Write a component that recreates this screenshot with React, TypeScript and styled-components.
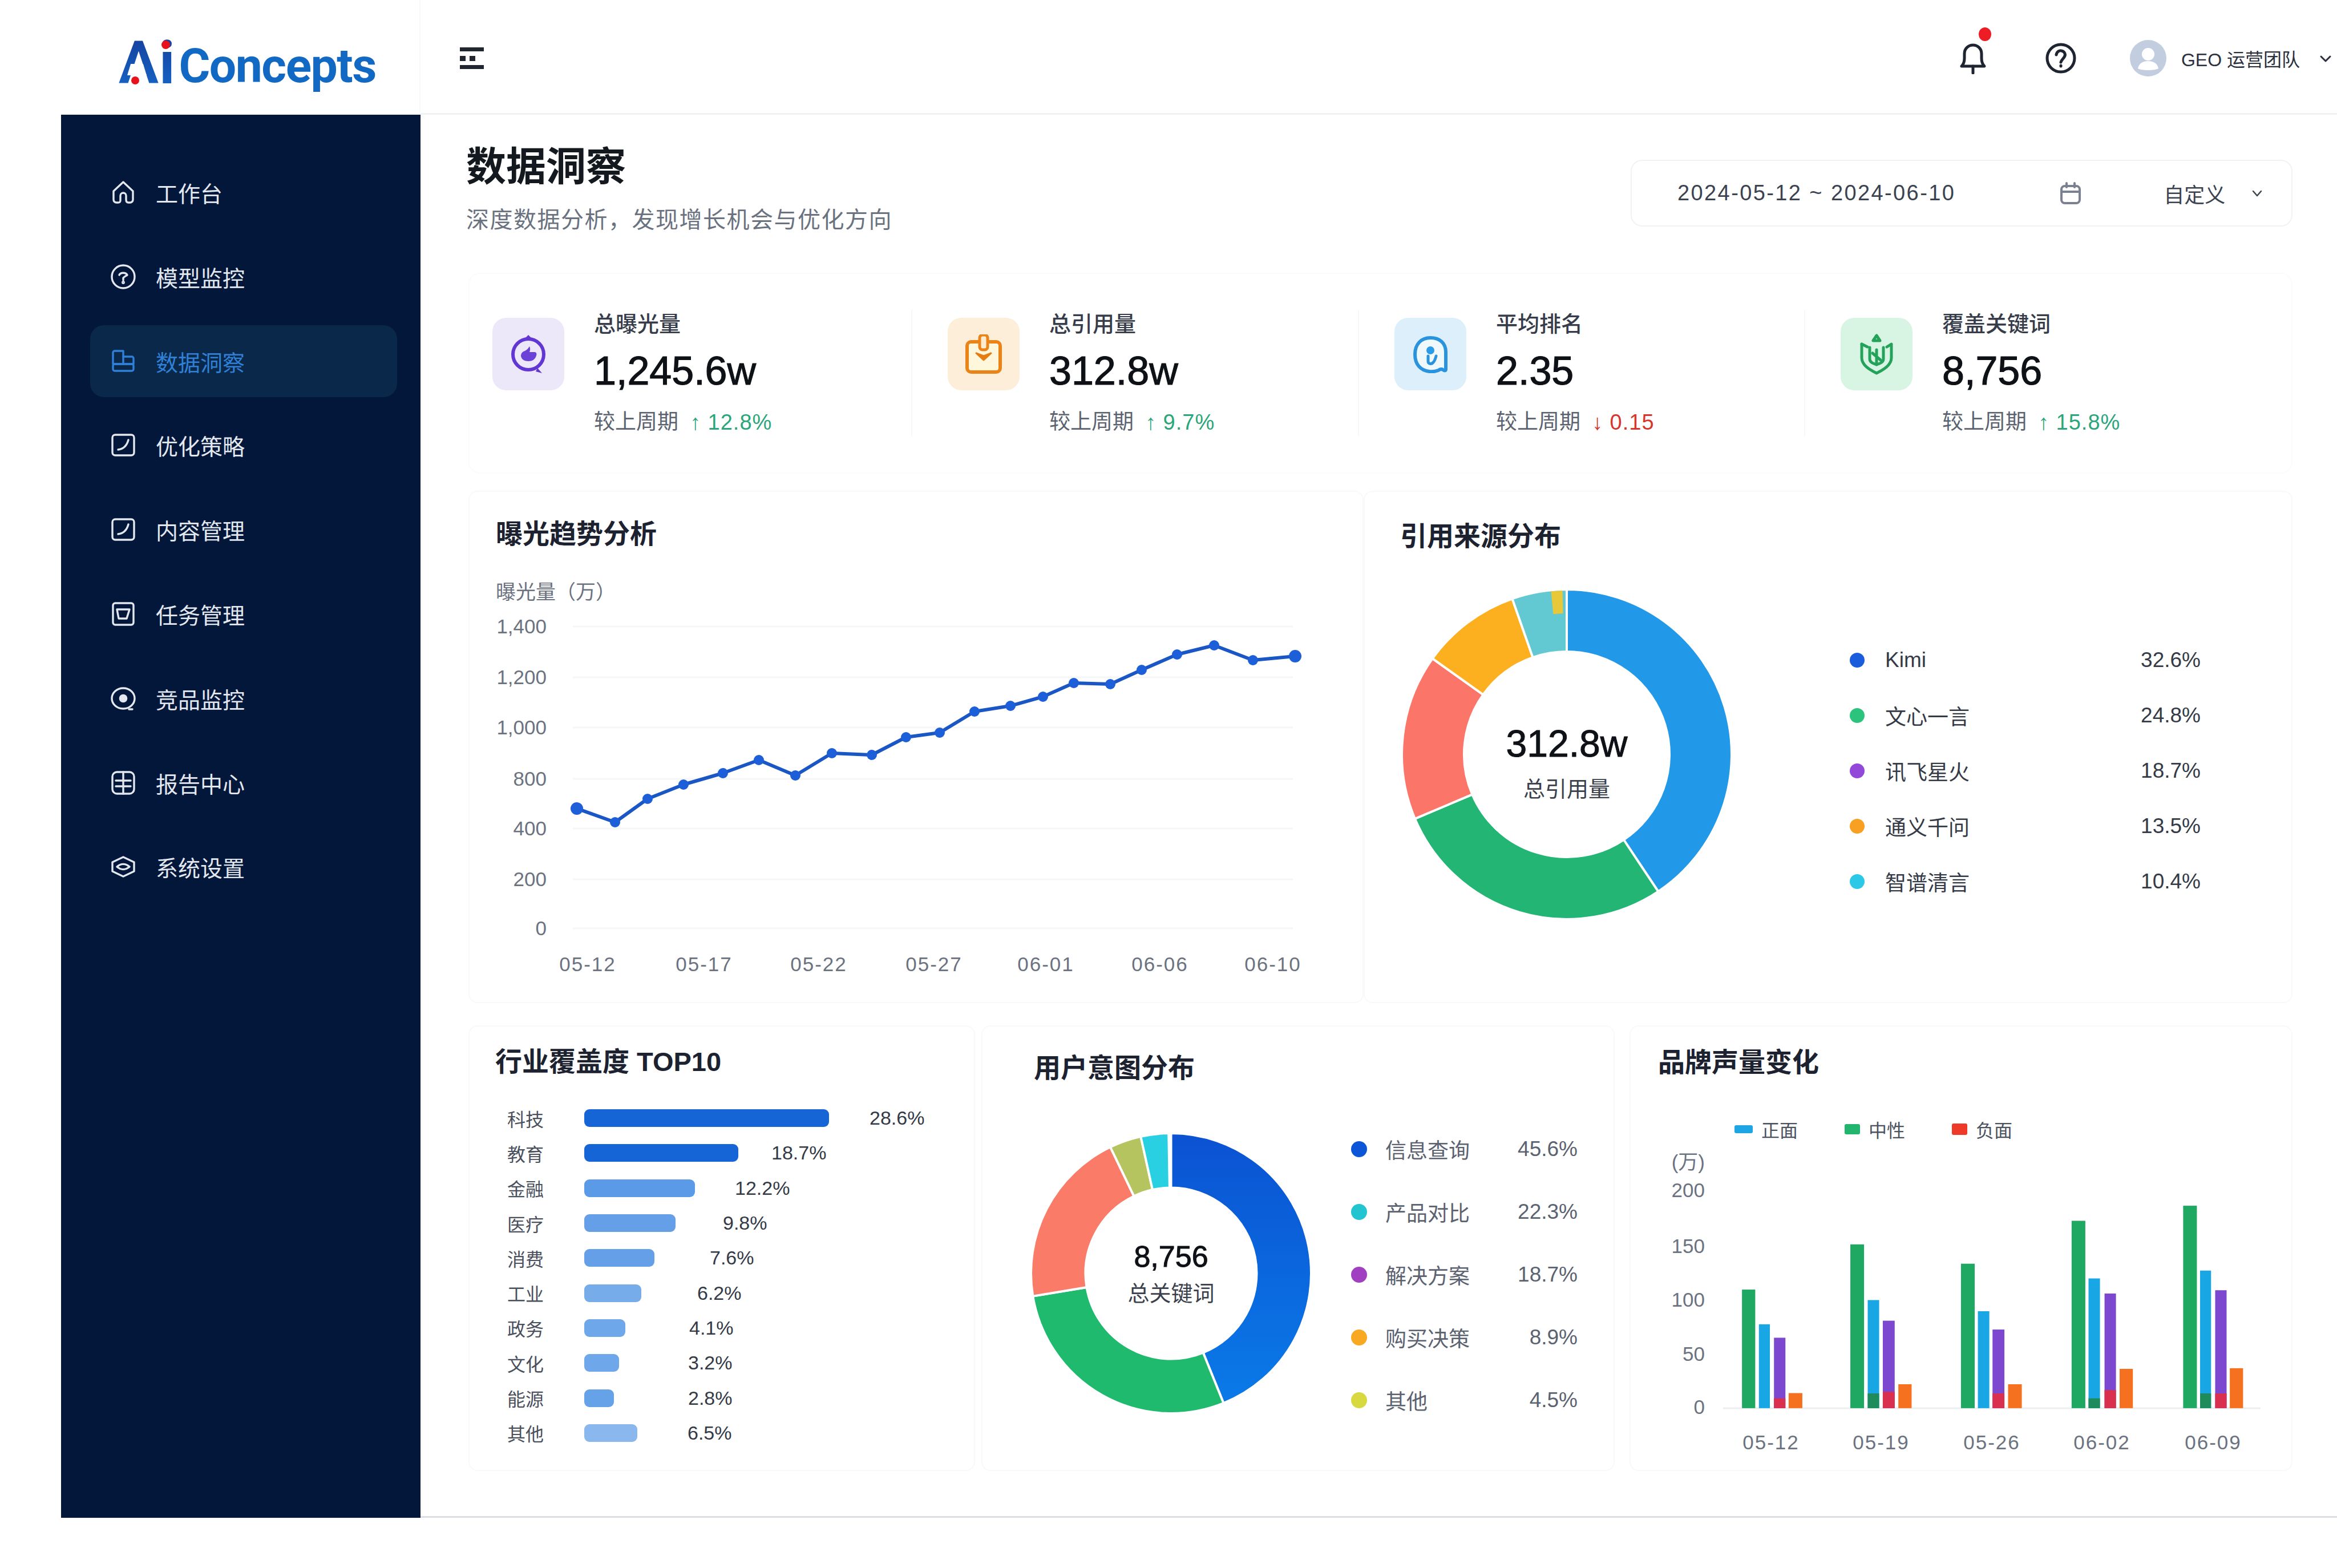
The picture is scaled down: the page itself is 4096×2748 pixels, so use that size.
import styled, { createGlobalStyle } from "styled-components";

const GlobalStyle = createGlobalStyle`
    html, body {
        margin: 0;
        padding: 0;
        background: #ffffff;
    }
    body {
        font-family: "Liberation Sans", "Noto Sans CJK SC", sans-serif;
    }
    * {
        box-sizing: border-box;
    }
`;

const Page = styled.div`
    display: grid;
    grid-template-columns: 630px 1fr;
    width: 4096px;
    height: 2748px;
    padding-left: 107px;
    overflow: hidden;
    background: #ffffff;
`;

const LeftColumn = styled.div`
    display: flex;
    flex-direction: column;
    height: 2660px;
`;

const LogoBox = styled.div`
    position: relative;
    display: flex;
    align-items: center;
    height: 201px;
    padding: 20px 0 0 101px;
    font-family: "Roboto", "Liberation Sans", sans-serif;
    font-weight: 700;
    border-right: 2px solid #f8f9fa;
`;

const LogoAi = styled.span`
    font-size: 104px;
    line-height: 1;
    letter-spacing: 1px;
    background: linear-gradient(180deg, #153f9c 0%, #1667c8 100%);
    -webkit-background-clip: text;
    background-clip: text;
    color: transparent;
`;

const LogoWord = styled.span`
    margin-left: 6px;
    padding-top: 10px;
    font-size: 84px;
    line-height: 1;
    letter-spacing: -1.5px;
    color: #1269c4;
`;

const LogoNotch = styled.i`
    position: absolute;
    left: 116px;
    top: 112px;
    width: 34px;
    height: 20px;
    background: #ffffff;
    clip-path: polygon(18% 0, 82% 0, 100% 100%, 0 100%);
`;

const LogoDot = styled.i<{ $left: number; $top: number; $size: number }>`
    position: absolute;
    left: ${(p) => p.$left}px;
    top: ${(p) => p.$top}px;
    width: ${(p) => p.$size}px;
    height: ${(p) => p.$size}px;
    border-radius: 50%;
    background: #e8121c;
`;

const Sidebar = styled.nav`
    flex: 1;
    display: flex;
    flex-direction: column;
    gap: 21.8px;
    padding: 73px 41px 0 51px;
    background: #03173a;
`;

const NavItem = styled.div<{ $active?: boolean }>`
    display: flex;
    align-items: center;
    gap: 33px;
    height: 126px;
    padding-left: 34px;
    border-radius: 24px;
    font-size: 39px;
    color: ${(p) => (p.$active ? "#2f80d6" : "#e3e8ef")};
    background: ${(p) => (p.$active ? "#0a2849" : "transparent")};
`;

const RightColumn = styled.div`
    display: flex;
    flex-direction: column;
    height: 2660px;
    border-bottom: 3px solid #dcdee2;
`;

const TopBar = styled.header`
    display: flex;
    align-items: center;
    height: 201px;
    padding: 6px 8px 0 68px;
    border-bottom: 3px solid #f1f2f4;
`;

const MenuGlyph = styled.svg`
    width: 44px;
    height: 44px;
`;

const TopActions = styled.div`
    display: flex;
    align-items: center;
    margin-left: auto;
    color: #1f2530;
`;

const BellWrap = styled.div`
    position: relative;
    display: flex;
    width: 50px;
    height: 56px;
    margin-right: 101px;
`;

const BellDot = styled.i`
    position: absolute;
    top: -26px;
    right: -7px;
    width: 22px;
    height: 24px;
    border-radius: 50%;
    background: #ee1c25;
`;

const Avatar = styled.svg`
    width: 64px;
    height: 64px;
    margin: 0 26px 0 93px;
`;

const UserName = styled.span`
    font-size: 32px;
    color: #2a303c;
    white-space: nowrap;
`;

const Chevron = styled.svg<{ $left: number }>`
    width: 24px;
    height: 24px;
    margin-left: ${(p) => p.$left}px;
`;

const Content = styled.main`
    padding: 50px 78px 0 84px;
`;

const PageHead = styled.div`
    display: flex;
    justify-content: space-between;
    align-items: flex-start;
    height: 227px;
`;

const TitleBlock = styled.div`
    margin-left: -4px;
`;

const PageTitle = styled.h1`
    margin: 0;
    font-size: 70px;
    line-height: 84px;
    font-weight: 700;
    color: #14181f;
`;

const PageSub = styled.p`
    margin: 25px 0 0;
    font-size: 40px;
    line-height: 50px;
    letter-spacing: 1.5px;
    color: #6a7280;
`;

const DateBox = styled.div`
    display: flex;
    align-items: center;
    width: 1160px;
    height: 117px;
    margin-top: 29px;
    padding-left: 80px;
    border: 2px solid #f1f2f5;
    border-radius: 20px;
    color: #3b4250;
`;

const DateText = styled.span`
    font-size: 38px;
    letter-spacing: 2.4px;
    white-space: nowrap;
`;

const CalendarGlyph = styled.svg`
    width: 38px;
    height: 40px;
    margin: 0 144px 0 183px;
    color: #7b8190;
`;

const RangeLabel = styled.span`
    font-size: 36px;
    white-space: nowrap;
`;

const StatStrip = styled.section`
    display: grid;
    grid-template-columns: 774px 783px 782px 1fr;
    align-items: center;
    height: 352px;
    margin-bottom: 30px;
    border: 2px solid #fafbfc;
    border-radius: 20px;
`;

const StatItem = styled.div<{ $first?: boolean }>`
    display: flex;
    align-items: flex-start;
    gap: 52px;
    height: 222px;
    padding-left: ${(p) => (p.$first ? 40 : 62)}px;
    padding-top: 14px;
    border-left: ${(p) => (p.$first ? "none" : "2px solid #f6f7f9")};
`;

const StatIconBox = styled.div<{ $bg: string }>`
    display: flex;
    align-items: center;
    justify-content: center;
    width: 126px;
    height: 127px;
    flex-shrink: 0;
    border-radius: 24px;
    background: ${(p) => p.$bg};
`;

const StatBody = styled.div`
    display: flex;
    flex-direction: column;
    margin-top: -14px;
`;

const StatLabel = styled.div`
    font-size: 38px;
    line-height: 50px;
    font-weight: 500;
    color: #363c49;
`;

const StatValue = styled.div`
    margin-top: 15px;
    font-size: 70px;
    line-height: 84px;
    -webkit-text-stroke: 1.2px #0e1116;
    color: #0e1116;
`;

const StatChange = styled.div`
    display: flex;
    gap: 20px;
    margin-top: 23px;
    font-size: 37px;
    line-height: 50px;
    color: #5c6370;
`;

const Delta = styled.span<{ $down?: boolean }>`
    font-size: 38px;
    letter-spacing: 1px;
    color: ${(p) => (p.$down ? "#d8352a" : "#2aa67a")};
`;

const ChartRow = styled.section<{ $height: number; $gap: number; $below?: number }>`
    display: flex;
    gap: ${(p) => p.$gap}px;
    height: ${(p) => p.$height}px;
    margin-bottom: ${(p) => p.$below ?? 0}px;
`;

const Card = styled.article<{ $width?: number; $padLeft: number; $padTop: number; $shift?: number }>`
    flex: ${(p) => (p.$width ? `0 0 ${p.$width}px` : "1")};
    margin-left: ${(p) => p.$shift ?? 0}px;
    padding: ${(p) => p.$padTop}px 0 0 ${(p) => p.$padLeft}px;
    border: 2px solid #f8f9fa;
    border-radius: 16px;
`;

const CardTitle = styled.h2`
    margin: 0;
    font-size: 47px;
    line-height: 60px;
    font-weight: 700;
    color: #1c2230;
`;

const LineSvg = styled.svg`
    display: block;
    width: 1500px;
    height: 750px;
    margin-top: 14px;
`;

const AxisText = styled.text<{ $spread?: boolean }>`
    font-size: 35px;
    letter-spacing: ${(p) => (p.$spread ? 2 : 0)}px;
    fill: #6b7280;
`;

const DonutBody = styled.div<{ $top: number; $shift: number }>`
    display: flex;
    align-items: flex-start;
    margin: ${(p) => p.$top}px 0 0 ${(p) => p.$shift}px;
`;

const DonutWrap = styled.div<{ $size: number }>`
    position: relative;
    flex-shrink: 0;
    width: ${(p) => p.$size}px;
    height: ${(p) => p.$size}px;
`;

const DonutOverlay = styled.svg`
    position: absolute;
    left: 0;
    top: 0;
`;

const DonutCenter = styled.div<{ $drop: number }>`
    position: absolute;
    inset: 0;
    display: flex;
    flex-direction: column;
    align-items: center;
    justify-content: center;
    padding-top: ${(p) => p.$drop}px;
`;

const CenterValue = styled.div<{ $size: number }>`
    font-size: ${(p) => p.$size}px;
    line-height: 1.15;
    -webkit-text-stroke: 1px #0e1116;
    color: #0e1116;
`;

const CenterLabel = styled.div<{ $gap: number }>`
    margin-top: ${(p) => p.$gap}px;
    font-size: 38px;
    line-height: 50px;
    color: #3a404c;
`;

const Legend = styled.ul<{ $gap: number; $top: number; $width: number }>`
    flex-shrink: 0;
    width: ${(p) => p.$width}px;
    margin: ${(p) => p.$top}px 0 0 ${(p) => p.$gap}px;
    padding: 0;
    list-style: none;
`;

const LegendRow = styled.li<{ $height: number; $color: string }>`
    display: flex;
    align-items: center;
    height: ${(p) => p.$height}px;
    font-size: 37px;
    color: ${(p) => p.$color};
`;

const LegendDot = styled.i<{ $color: string; $size: number; $after: number }>`
    width: ${(p) => p.$size}px;
    height: ${(p) => p.$size}px;
    margin-right: ${(p) => p.$after}px;
    border-radius: 50%;
    background: ${(p) => p.$color};
`;

const LegendValue = styled.span`
    margin-left: auto;
`;

const BarList = styled.div`
    margin: 38px 0 0 21px;
`;

const BarRow = styled.div`
    display: flex;
    align-items: center;
    height: 61.3px;
`;

const BarLabel = styled.span`
    width: 135px;
    font-size: 32px;
    color: #4a505c;
`;

const Bar = styled.div<{ $width: number; $color: string }>`
    width: ${(p) => p.$width}px;
    height: 31px;
    border-radius: 9px;
    background: ${(p) => p.$color};
`;

const BarValue = styled.span<{ $gap: number }>`
    margin-left: ${(p) => p.$gap}px;
    font-size: 34px;
    color: #343a46;
`;

const BrandLegend = styled.div`
    display: flex;
    align-items: center;
    height: 40px;
    margin: 67px 0 0 134px;
`;

const BrandKey = styled.span<{ $color: string; $width: number; $height: number; $gap: number }>`
    display: flex;
    align-items: center;
    margin-right: ${(p) => p.$gap}px;
    font-size: 32px;
    color: #4b5260;

    &::before {
        content: "";
        width: ${(p) => p.$width}px;
        height: ${(p) => p.$height}px;
        margin-right: 15px;
        border-radius: 3px;
        background: ${(p) => p.$color};
    }
`;

const BrandSvg = styled.svg`
    display: block;
    width: 1060px;
    height: 560px;
    margin: 0 0 0 24px;
`;

function NavGlyph({ name }: { name: string }) {
    let body = null;
    if (name === "home") {
        body = (
            <path d="M3.500 11 12 3l8.500 8v7.500a2.500 2.500 0 0 1-2.500 2.500h-1.500c-1.500 0-2-1-2-2.500V15a2.500 2.500 0 0 0-5 0v4c0 1.500-.5 2-2 2H6a2.500 2.500 0 0 1-2.500-2.500z" />
        );
    } else if (name === "watch") {
        body = (
            <>
                <circle cx="12" cy="12" r="10" />
                <path d="M8.500 10.500c1-2.500 6-2.500 7 0-1.500 1-2.500 1.500-3.500 2.500v2" />
                <circle cx="12" cy="17" r=".6" />
            </>
        );
    } else if (name === "book") {
        body = (
            <>
                <path d="M3 4.500A1.500 1.500 0 0 1 4.500 3H12v11.500H3z" />
                <path d="M12 8h7.500A1.500 1.500 0 0 1 21 9.500v5H12" />
                <rect x="3" y="14.500" width="18" height="6" rx="1.500" />
            </>
        );
    } else if (name === "pen") {
        body = (
            <>
                <rect x="2.500" y="3" width="19" height="18" rx="2.500" />
                <path d="M7.500 16c4.500-.5 7.500-3 9-8.500" />
            </>
        );
    } else if (name === "task") {
        body = (
            <>
                <rect x="3" y="2.500" width="18" height="19" rx="2" />
                <path d="M6.500 8h11l-2.500 8H8z" />
            </>
        );
    } else if (name === "rival") {
        body = (
            <>
                <ellipse cx="12" cy="12" rx="10" ry="9" />
                <circle cx="12" cy="12" r="2.800" fill="currentColor" />
                <path d="M17 21.500h3" />
            </>
        );
    } else if (name === "report") {
        body = (
            <>
                <rect x="2.500" y="2.500" width="19" height="19" rx="4" />
                <path d="M12 2.500v19M5.500 10h13M5.500 15h13" />
            </>
        );
    } else {
        body = (
            <>
                <path d="M12 3.500 21.500 8v8L12 20.500 2.500 16V8z" />
                <path d="M6.500 12c3.500-3 7.500-3 11 0-3.500 3-7.500 3-11 0z" />
            </>
        );
    }
    return (
        <svg width="48" height="48" viewBox="0 0 24 24" fill="none" stroke="currentColor" strokeWidth="1.700" strokeLinecap="round" strokeLinejoin="round">
            {body}
        </svg>
    );
}

function StatGlyph({ kind }: { kind: string }) {
    if (kind === "eye") {
        return (
            <svg width="64" height="72" viewBox="0 0 64 72" fill="none">
                <circle cx="32" cy="36" r="27" stroke="#6236d2" strokeWidth="6" />
                <path d="M32 2l6 6H26zM48 60l8 9-11-3z" fill="#6236d2" />
                <path d="M34 22c2 4 1 8 0 10h9c3 0 4 3 3 6-2 7-7 10-14 10-7 0-12-3-13-9 0-5 3-8 7-9 4-2 6-5 8-8z" fill="#6a42d8" />
            </svg>
        );
    }
    if (kind === "clip") {
        return (
            <svg width="66" height="70" viewBox="0 0 66 70" fill="none">
                <rect x="4" y="13" width="58" height="53" rx="7" fill="#fff7dc" stroke="#ea8418" strokeWidth="6" />
                <rect x="26" y="1" width="14" height="26" rx="5" fill="#fdeccf" stroke="#ea8418" strokeWidth="5" />
                <path d="M20 33l13 12 13-12-13 5z" fill="#e67d12" stroke="#e67d12" strokeWidth="3" strokeLinejoin="round" />
            </svg>
        );
    }
    if (kind === "info") {
        return (
            <svg width="62" height="66" viewBox="0 0 62 66" fill="none">
                <path d="M31 4c16 0 27 9 27 25v30c0 3-2 3-5 1-3-2-5-1-8 1-5 2-10 3-16 2C13 61 4 50 4 33 4 15 15 4 31 4z" fill="#eff8fb" stroke="#2a93de" strokeWidth="6" strokeLinejoin="round" />
                <circle cx="31" cy="26" r="7" fill="#2a9be6" />
                <path d="M27 36v9c0 5 6 6 9 2 3-3 4-7 5-11" stroke="#2a93de" strokeWidth="5" strokeLinecap="round" />
            </svg>
        );
    }
    return (
        <svg width="62" height="72" viewBox="0 0 62 72" fill="none" stroke="#25a25a" strokeWidth="5" strokeLinecap="round" strokeLinejoin="round">
            <path d="M5 18v24c0 13 14 21 26 27 12-6 26-14 26-27V18l-8 5" />
            <path d="M5 18l10 5M31 3l-6 9h12z" />
            <path d="M19 24v20c0 6 6 8 12 10 6-2 12-4 12-10V24" />
            <path d="M31 28v26M24 34l14 12" />
        </svg>
    );
}

const polar = (cx: number, cy: number, r: number, deg: number) => {
    const a = ((deg - 90) * Math.PI) / 180;
    return `${(cx + r * Math.cos(a)).toFixed(2)} ${(cy + r * Math.sin(a)).toFixed(2)}`;
};

const ringPath = (c: number, R: number, r: number, from: number, to: number) => {
    const large = to - from > 180 ? 1 : 0;
    return `M${polar(c, c, R, from)}A${R} ${R} 0 ${large} 1 ${polar(c, c, R, to)}L${polar(c, c, r, to)}A${r} ${r} 0 ${large} 0 ${polar(c, c, r, from)}Z`;
};

type Slice = { from: number; to: number; color: string };

function Donut({ size, inner, slices, id }: { size: number; inner: number; slices: Slice[]; id: string }) {
    const c = size / 2;
    return (
        <svg width={size} height={size} viewBox={`0 0 ${size} ${size}`}>
            <defs>
                <linearGradient id={id} x1="0" y1="0" x2="0" y2="1">
                    <stop offset="0" stopColor="#0b52d2" />
                    <stop offset="1" stopColor="#0a7ae8" />
                </linearGradient>
            </defs>
            {slices.map((s) => (
                <path
                    key={s.from}
                    d={ringPath(c, c, inner, s.from, s.to)}
                    fill={s.color === "grad" ? `url(#${id})` : s.color}
                    stroke="#ffffff"
                    strokeWidth="4"
                />
            ))}
        </svg>
    );
}

const navItems = [
    { icon: "home", label: "工作台" },
    { icon: "watch", label: "模型监控" },
    { icon: "book", label: "数据洞察", active: true },
    { icon: "pen", label: "优化策略" },
    { icon: "pen", label: "内容管理" },
    { icon: "task", label: "任务管理" },
    { icon: "rival", label: "竞品监控" },
    { icon: "report", label: "报告中心" },
    { icon: "gear", label: "系统设置" },
];

const stats = [
    { kind: "eye", bg: "#ece8fa", label: "总曝光量", value: "1,245.6w", delta: "↑ 12.8%" },
    { kind: "clip", bg: "#fdeeda", label: "总引用量", value: "312.8w", delta: "↑ 9.7%" },
    { kind: "info", bg: "#dceffa", label: "平均排名", value: "2.35", delta: "↓ 0.15", down: true },
    { kind: "shield", bg: "#d8f5e4", label: "覆盖关键词", value: "8,756", delta: "↑ 15.8%" },
];

const linePoints = [
    [1011, 1417], [1078, 1441], [1135, 1400], [1198, 1375], [1267, 1355], [1330, 1332], [1394, 1359],
    [1458, 1320], [1528, 1323], [1588, 1292], [1647, 1284], [1708, 1247], [1771, 1237], [1828, 1221],
    [1882, 1197], [1946, 1199], [2001, 1174], [2063, 1147], [2128, 1131], [2196, 1157], [2270, 1150],
];
const lineTicks = [
    ["1,400", 1098], ["1,200", 1187], ["1,000", 1275], ["800", 1365], ["400", 1452], ["200", 1541], ["0", 1627],
] as const;
const lineDates = [
    ["05-12", 1030], ["05-17", 1234], ["05-22", 1435], ["05-27", 1637], ["06-01", 1833], ["06-06", 2033], ["06-10", 2231],
] as const;

const sourceSlices: Slice[] = [
    { from: 0, to: 146.3, color: "#2299e8" },
    { from: 146.3, to: 247, color: "#22b573" },
    { from: 247, to: 305.5, color: "#fb7568" },
    { from: 305.5, to: 340.7, color: "#fdb01f" },
    { from: 340.7, to: 360, color: "#62c8d2" },
];
const sourceLegend = [
    ["Kimi", "32.6%", "#1a5cdc"],
    ["文心一言", "24.8%", "#2cc47c"],
    ["讯飞星火", "18.7%", "#9248d8"],
    ["通义千问", "13.5%", "#f7a021"],
    ["智谱清言", "10.4%", "#2cc8e8"],
];

const industries = [
    ["科技", 429, "28.6%", 71, "#1565d6"],
    ["教育", 270, "18.7%", 58, "#1565d6"],
    ["金融", 194, "12.2%", 70, "#5a9ae6"],
    ["医疗", 160, "9.8%", 83, "#649fe8"],
    ["消费", 123, "7.6%", 97, "#649fe8"],
    ["工业", 100, "6.2%", 98, "#76ace9"],
    ["政务", 72, "4.1%", 112, "#6ea7ea"],
    ["文化", 61, "3.2%", 121, "#6ea7ea"],
    ["能源", 52, "2.8%", 130, "#66a2e8"],
    ["其他", 93, "6.5%", 88, "#8ab8ee"],
] as const;

const intentSlices: Slice[] = [
    { from: 0, to: 158, color: "grad" },
    { from: 158, to: 260.6, color: "#20ba6e" },
    { from: 260.6, to: 334.3, color: "#f97b68" },
    { from: 334.3, to: 347.5, color: "#b5c45e" },
    { from: 347.5, to: 359, color: "#28d0e2" },
];
const intentLegend = [
    ["信息查询", "45.6%", "#0b55d6"],
    ["产品对比", "22.3%", "#22c4d0"],
    ["解决方案", "18.7%", "#a040c0"],
    ["购买决策", "8.9%", "#f9a821"],
    ["其他", "4.5%", "#d8d840"],
];

// x0, x1 and top of each bar: green, blue, purple, orange, then the height of the
// dark stretch at the foot of blue and purple
const brandGroups = [
    { label: "05-12", cx: 3104, bars: [[266, 295, 838], [303, 327, 944], [336, 361, 985], [368, 398, 1154]], foot: [0, 30] },
    { label: "05-19", cx: 3297, bars: [[503, 533, 700], [541, 566, 870], [574, 600, 933], [608, 637, 1127]], foot: [45, 50] },
    { label: "05-26", cx: 3491, bars: [[745, 775, 759], [782, 807, 904], [814, 840, 960], [848, 878, 1127]], foot: [0, 45] },
    { label: "06-02", cx: 3684, bars: [[987, 1017, 628], [1024, 1049, 804], [1059, 1084, 850], [1092, 1121, 1080]], foot: [30, 55] },
    { label: "06-09", cx: 3879, bars: [[1231, 1261, 582], [1268, 1292, 780], [1301, 1326, 840], [1333, 1362, 1078]], foot: [45, 45] },
];
const brandColors = ["#1fa862", "#18a7e4", "#7c48cf", "#f5701f"];
const brandTicks = [["(万)", 2038], ["200", 2087], ["150", 2185], ["100", 2279], ["50", 2374], ["0", 2467]] as const;
const bx = (d: number) => 2840 + d / 1.248;
const by = (d: number) => 1780 + d / 1.742;

export default function App() {
    return (
        <Page>
            <GlobalStyle />
            <LeftColumn>
                <LogoBox>
                    <LogoAi>Ai</LogoAi>
                    <LogoWord>Concepts</LogoWord>
                    <LogoNotch />
                    <LogoDot $left={176} $top={71} $size={15} />
                    <LogoDot $left={123} $top={134} $size={14} />
                </LogoBox>
                <Sidebar>
                    {navItems.map((item) => (
                        <NavItem key={item.label} $active={item.active}>
                            <NavGlyph name={item.icon} />
                            <span>{item.label}</span>
                        </NavItem>
                    ))}
                </Sidebar>
            </LeftColumn>

            <RightColumn>
                <TopBar>
                    <MenuGlyph viewBox="0 0 44 44">
                        <rect x="1" y="3" width="42" height="7" fill="#22262e" />
                        <rect x="1" y="18" width="10" height="9" fill="#22262e" />
                        <rect x="18" y="18" width="10" height="9" fill="#22262e" />
                        <rect x="1" y="34" width="42" height="7" fill="#22262e" />
                    </MenuGlyph>
                    <TopActions>
                        <BellWrap>
                            <svg width="50" height="56" viewBox="0 0 50 56" fill="none" stroke="#1f2530" strokeWidth="5" strokeLinecap="round" strokeLinejoin="round">
                                <path d="M5 42c4-4 5-8 5-14V20C10 11 17 5 25 5s15 6 15 15v8c0 6 1 10 5 14z" />
                                <path d="M25 42v12" />
                            </svg>
                            <BellDot />
                        </BellWrap>
                        <svg width="56" height="56" viewBox="0 0 56 56" fill="none" stroke="#1f2530" strokeWidth="5" strokeLinecap="round">
                            <circle cx="28" cy="28" r="24" />
                            <path d="M20 22c1-6 6-8 9-7 6 1 8 7 5 11-2 3-5 5-6 9" />
                            <path d="M28 41v1" />
                        </svg>
                        <Avatar viewBox="0 0 64 64">
                            <circle cx="32" cy="32" r="32" fill="#c3cde0" />
                            <circle cx="32" cy="25" r="11" fill="#ffffff" />
                            <path d="M14 50c2-10 10-13 18-13s16 3 18 13c-5 4-31 4-36 0z" fill="#ffffff" />
                        </Avatar>
                        <UserName>GEO 运营团队</UserName>
                        <Chevron $left={33} viewBox="0 0 24 24" fill="none" stroke="#2a303c" strokeWidth="3" strokeLinecap="round" strokeLinejoin="round">
                            <path d="M4 9l8 8 8-8" />
                        </Chevron>
                    </TopActions>
                </TopBar>

                <Content>
                    <PageHead>
                        <TitleBlock>
                            <PageTitle>数据洞察</PageTitle>
                            <PageSub>深度数据分析，发现增长机会与优化方向</PageSub>
                        </TitleBlock>
                        <DateBox>
                            <DateText>2024-05-12 ~ 2024-06-10</DateText>
                            <CalendarGlyph viewBox="0 0 38 40" fill="none" stroke="currentColor" strokeWidth="4" strokeLinecap="round">
                                <rect x="3" y="7" width="32" height="30" rx="6" />
                                <path d="M3 17h32M12 2v7M26 2v7" />
                            </CalendarGlyph>
                            <RangeLabel>自定义</RangeLabel>
                            <Chevron $left={44} viewBox="0 0 24 24" fill="none" stroke="#3b4250" strokeWidth="2.500" strokeLinecap="round" strokeLinejoin="round">
                                <path d="M5 8l7 8 7-8" />
                            </Chevron>
                        </DateBox>
                    </PageHead>

                    <StatStrip>
                        {stats.map((s, i) => (
                            <StatItem key={s.label} $first={i === 0}>
                                <StatIconBox $bg={s.bg}>
                                    <StatGlyph kind={s.kind} />
                                </StatIconBox>
                                <StatBody>
                                    <StatLabel>{s.label}</StatLabel>
                                    <StatValue>{s.value}</StatValue>
                                    <StatChange>
                                        <span>较上周期</span>
                                        <Delta $down={s.down}>{s.delta}</Delta>
                                    </StatChange>
                                </StatBody>
                            </StatItem>
                        ))}
                    </StatStrip>

                    <ChartRow $height={898} $gap={0} $below={39}>
                        <Card $width={1569} $padLeft={46} $padTop={44}>
                            <CardTitle>曝光趋势分析</CardTitle>
                            <LineSvg viewBox="869 980 1500 750">
                                <AxisText x="869" y="1050">曝光量（万）</AxisText>
                                {lineTicks.map(([label, y]) => (
                                    <g key={label}>
                                        <AxisText x="958" y={y + 12} textAnchor="end">{label}</AxisText>
                                        <line x1="1004" x2="2266" y1={y} y2={y} stroke="#f5f6f8" strokeWidth="3" />
                                    </g>
                                ))}
                                {lineDates.map(([label, x]) => (
                                    <AxisText key={label} $spread x={x} y="1702" textAnchor="middle">{label}</AxisText>
                                ))}
                                <polyline
                                    points={linePoints.map((p) => p.join(",")).join(" ")}
                                    fill="none"
                                    stroke="#1a56c4"
                                    strokeWidth="6"
                                    strokeLinejoin="round"
                                />
                                {linePoints.map(([x, y], i) => (
                                    <circle key={x} cx={x} cy={y} r={i === 0 || i === linePoints.length - 1 ? 11 : 9} fill="#1d5fd8" />
                                ))}
                            </LineSvg>
                        </Card>
                        <Card $padLeft={62} $padTop={48}>
                            <CardTitle>引用来源分布</CardTitle>
                            <DonutBody $top={63} $shift={3}>
                                <DonutWrap $size={578}>
                                    <Donut id="srcBlue" size={578} inner={180} slices={sourceSlices} />
                                    <DonutOverlay width="578" height="578" viewBox="0 0 578 578">
                                        <path d={ringPath(289, 287, 247, 354.5, 358.5)} fill="#e8c838" />
                                    </DonutOverlay>
                                    <DonutCenter $drop={30}>
                                        <CenterValue $size={66}>312.8w</CenterValue>
                                        <CenterLabel $gap={16}>总引用量</CenterLabel>
                                    </DonutCenter>
                                </DonutWrap>
                                <Legend $gap={207} $top={75} $width={615}>
                                    {sourceLegend.map(([name, pct, color]) => (
                                        <LegendRow key={name} $height={97} $color="#343a46">
                                            <LegendDot $color={color} $size={26} $after={36} />
                                            <span>{name}</span>
                                            <LegendValue>{pct}</LegendValue>
                                        </LegendRow>
                                    ))}
                                </Legend>
                            </DonutBody>
                        </Card>
                    </ChartRow>

                    <ChartRow $height={781} $gap={11}>
                        <Card $width={888} $padLeft={45} $padTop={32}>
                            <CardTitle>行业覆盖度 TOP10</CardTitle>
                            <BarList>
                                {industries.map(([name, width, pct, gap, color]) => (
                                    <BarRow key={name}>
                                        <BarLabel>{name}</BarLabel>
                                        <Bar $width={width} $color={color} />
                                        <BarValue $gap={gap}>{pct}</BarValue>
                                    </BarRow>
                                ))}
                            </BarList>
                        </Card>
                        <Card $width={1110} $padLeft={90} $padTop={43}>
                            <CardTitle>用户意图分布</CardTitle>
                            <DonutBody $top={84} $shift={-5}>
                                <DonutWrap $size={491}>
                                    <Donut id="intentBlue" size={491} inner={150} slices={intentSlices} />
                                    <DonutCenter $drop={2}>
                                        <CenterValue $size={52}>8,756</CenterValue>
                                        <CenterLabel $gap={10}>总关键词</CenterLabel>
                                    </DonutCenter>
                                </DonutWrap>
                                <Legend $gap={70} $top={-27} $width={397}>
                                    {intentLegend.map(([name, pct, color]) => (
                                        <LegendRow key={name} $height={110} $color="#5b6270">
                                            <LegendDot $color={color} $size={28} $after={32} />
                                            <span>{name}</span>
                                            <LegendValue>{pct}</LegendValue>
                                        </LegendRow>
                                    ))}
                                </Legend>
                            </DonutBody>
                        </Card>
                        <Card $padLeft={48} $padTop={33} $shift={15}>
                            <CardTitle>品牌声量变化</CardTitle>
                            <BrandLegend>
                                <BrandKey $color="#1ea5e4" $width={32} $height={14} $gap={82}>正面</BrandKey>
                                <BrandKey $color="#22b56e" $width={27} $height={18} $gap={82}>中性</BrandKey>
                                <BrandKey $color="#ee3a28" $width={27} $height={20} $gap={0}>负面</BrandKey>
                            </BrandLegend>
                            <BrandSvg viewBox="2930 2000 1060 560">
                                {brandTicks.map(([label, y]) => (
                                    <AxisText key={label} x="2988" y={y + 12} textAnchor="end">{label}</AxisText>
                                ))}
                                <line x1="3020" x2="3962" y1="2469" y2="2469" stroke="#eceef1" strokeWidth="3" />
                                {brandGroups.map((g) => (
                                    <g key={g.label}>
                                        {g.bars.map(([x0, x1, top], i) => (
                                            <rect key={i} x={bx(x0)} y={by(top)} width={(x1 - x0) / 1.248} height={by(1200) - by(top)} fill={brandColors[i]} />
                                        ))}
                                        {g.foot[0] > 0 && (
                                            <rect x={bx(g.bars[1][0])} y={by(1200 - g.foot[0])} width={(g.bars[1][1] - g.bars[1][0]) / 1.248} height={g.foot[0] / 1.742} fill="#1f8a5a" />
                                        )}
                                        <rect x={bx(g.bars[2][0])} y={by(1200 - g.foot[1])} width={(g.bars[2][1] - g.bars[2][0]) / 1.248} height={g.foot[1] / 1.742} fill="#d9304f" />
                                        <AxisText $spread x={g.cx} y="2541" textAnchor="middle">{g.label}</AxisText>
                                    </g>
                                ))}
                            </BrandSvg>
                        </Card>
                    </ChartRow>
                </Content>
            </RightColumn>
        </Page>
    );
}
